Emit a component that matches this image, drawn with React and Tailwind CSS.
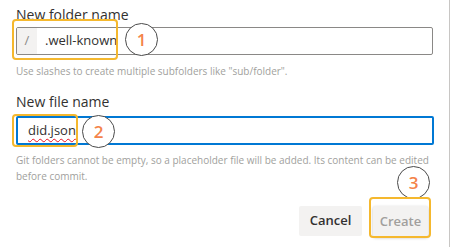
import React from 'react';

function Marker({ n, className }) {
  return (
    <div
      className={`absolute w-[33px] h-[33px] rounded-full border-[1.5px] border-[#4a4a4a] bg-white flex items-center justify-center text-[17px] font-semibold text-[#f4834a] ${className}`}
    >
      {n}
    </div>
  );
}

function Highlight({ className }) {
  return <div className={`absolute border-2 border-[#f5b82e] rounded-[4px] ${className}`}></div>;
}

export default function App() {
  return (
    <div className="relative w-[453px] h-[247px] bg-white overflow-hidden font-['Open_Sans','Liberation_Sans',sans-serif]">
      <div className="w-[450px] h-full border-r border-[#c8c6c4] pl-[16px] pr-[16px] pt-[5px]">
        <div className="text-[14px] leading-[19px] text-[#323130]">New folder name</div>
        <div className="mt-[3px] flex h-[28px] w-[417px] border border-[#8a8886] rounded-[2px] overflow-hidden">
          <div className="w-[20px] bg-[#f3f2f1] flex items-center justify-center text-[13px] text-[#8a8886]">/</div>
          <div className="pl-[8px] flex items-center text-[13px] text-[#323130]">.well-known</div>
        </div>
        <div className="mt-[9px] text-[10px] leading-[14px] text-[#a19f9d]">
          Use slashes to create multiple subfolders like "sub/folder".
        </div>

        <div className="mt-[14px] text-[14px] leading-[19px] text-[#323130]">New file name</div>
        <div className="mt-[5px] flex h-[29px] w-[418px] border-2 border-[#0078d4] rounded-[2px] items-center pl-[10px]">
          <span className="text-[13px] text-[#323130] underline decoration-wavy decoration-[#e81123] decoration-1 underline-offset-[3px]">
            did.json
          </span>
          <span className="w-px h-[17px] bg-[#323130]"></span>
        </div>
        <div className="mt-[7px] text-[10px] leading-[16px] text-[#a19f9d] w-[416px]">
          Git folders cannot be empty, so a placeholder file will be added. Its content can be edited before commit.
        </div>

        <div className="mt-[22px] flex justify-end gap-[11px] pr-[5px]">
          <button className="w-[63px] h-[30px] rounded-[2px] bg-[#f3f2f1] text-[13px] font-semibold text-[#323130]">
            Cancel
          </button>
          <button className="w-[55px] h-[31px] rounded-[2px] bg-[#f3f2f1] text-[13px] font-semibold text-[#a19f9d] shadow-[0_1px_3px_rgba(0,0,0,0.25)]">
            Create
          </button>
        </div>
      </div>

      <Highlight className="left-[12px] top-[19px] w-[106px] h-[41px]" />
      <Marker n="1" className="left-[125px] top-[23px]" />

      <Highlight className="left-[12px] top-[114px] w-[66px] h-[33px]" />
      <Marker n="2" className="left-[82px] top-[115px]" />

      <Marker n="3" className="left-[397px] top-[166px]" />
      <Highlight className="left-[369px] top-[197px] w-[62px] h-[41px]" />
    </div>
  );
}
